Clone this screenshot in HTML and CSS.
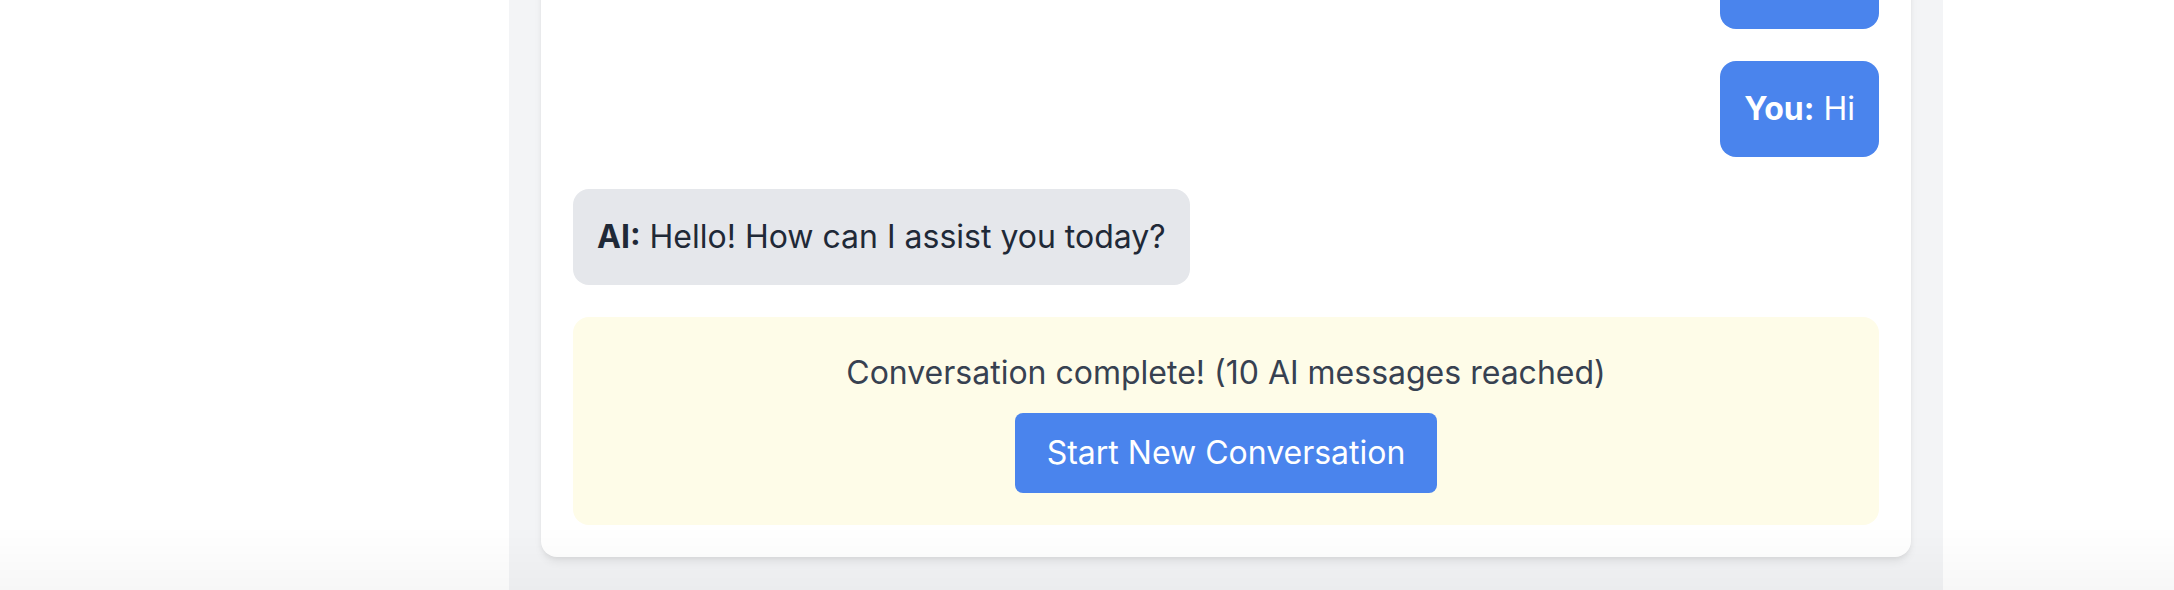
FILE: index.html
```html
<!DOCTYPE html>
<html lang="en">
<head>
<meta charset="utf-8">
<title>Chat</title>
<link rel="stylesheet" href="styles.css">
</head>
<body>
<div class="page">
  <div class="side"></div>
  <main class="column">
    <section class="card">
      <div class="msg user"><b>You:</b> Hi</div>
      <div class="msg user"><b>You:</b> Hi</div>
      <div class="msg ai"><b>AI:</b> Hello! How can I assist you today?</div>
      <div class="done">
        <p class="done-text">Conversation complete! (10 AI messages reached)</p>
        <button class="btn" type="button">Start New Conversation</button>
      </div>
    </section>
  </main>
  <div class="side"></div>
</div>
<div class="fade"></div>
</body>
</html>
```

FILE: styles.css
```css
html, body {
  margin: 0;
  padding: 0;
  height: 590px;
  overflow: hidden;
  background: #ffffff;
  font-family: Inter, "Noto Sans", "Liberation Sans", sans-serif;
}

.page {
  display: grid;
  grid-template-columns: 509px 1434px 1fr;
  height: 590px;
}

.column {
  background: #f3f4f6;
  padding: 0 32px 33px;
  display: flex;
  flex-direction: column;
  justify-content: flex-end;
  overflow: hidden;
}

.card {
  background: #ffffff;
  border-radius: 16px;
  padding: 32px;
  display: flex;
  flex-direction: column;
  gap: 32px;
  box-shadow: 0 6px 10px -2px rgba(0, 0, 0, 0.08), 0 2px 6px -2px rgba(0, 0, 0, 0.08);
}

.msg {
  padding: 24px;
  border-radius: 16px;
  font-size: 32px;
  line-height: 48px;
  white-space: nowrap;
}

.msg b {
  font-weight: 700;
}

.user {
  align-self: flex-end;
  background: #4a84ed;
  color: #ffffff;
}

.ai {
  align-self: flex-start;
  background: #e5e7eb;
  color: #1f2937;
}

.done {
  background: #fefce8;
  border-radius: 16px;
  padding: 32px;
  text-align: center;
}

.done-text {
  margin: 0 0 16px;
  font-size: 32px;
  line-height: 48px;
  color: #374151;
}

.btn {
  font-family: inherit;
  font-size: 32px;
  line-height: 48px;
  padding: 16px 32px;
  border: none;
  border-radius: 8px;
  background: #4a84ed;
  color: #ffffff;
  cursor: pointer;
}

.fade {
  position: fixed;
  left: 0;
  right: 0;
  bottom: 0;
  height: 64px;
  pointer-events: none;
  background: linear-gradient(to bottom, rgba(0, 0, 0, 0), rgba(0, 0, 0, 0.03));
}
```
